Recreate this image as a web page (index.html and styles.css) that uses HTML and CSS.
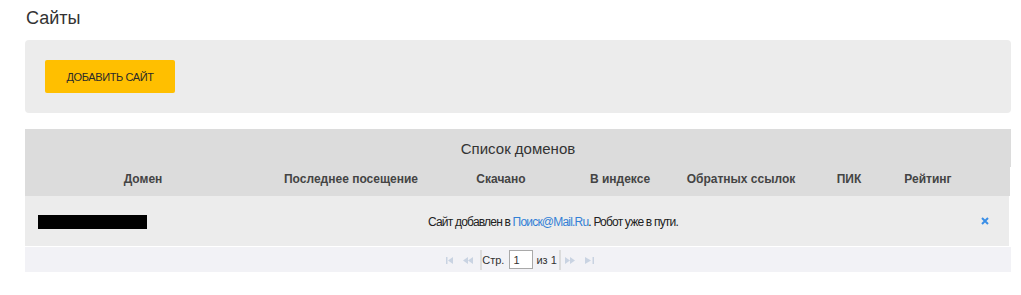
FILE: index.html
```html
<!DOCTYPE html>
<html lang="ru">
<head>
<meta charset="utf-8">
<title>Сайты</title>
<link rel="stylesheet" href="styles.css">
</head>
<body>
<div class="page">
  <h1 class="title">Сайты</h1>
  <div class="panel">
    <button class="btn-add">ДОБАВИТЬ САЙТ</button>
  </div>
  <div class="grid">
    <div class="caption">Список доменов</div>
    <div class="cols">
      <div class="col">Домен</div>
      <div class="col">Последнее посещение</div>
      <div class="col">Скачано</div>
      <div class="col">В индексе</div>
      <div class="col">Обратных ссылок</div>
      <div class="col">ПИК</div>
      <div class="col">Рейтинг</div>
      <div class="col"></div>
    </div>
    <div class="row">
      <div class="cell-domain"><span class="redacted"></span></div>
      <div class="cell-msg">Сайт добавлен в <a class="link" href="#">Поиск@Mail.Ru</a>. Робот уже в пути.</div>
      <div class="cell-close">
        <svg class="close" width="8" height="8" viewBox="0 0 8 8"><path d="M1 1L7 7M7 1L1 7" stroke="#3a8ee6" stroke-width="2"/></svg>
      </div>
    </div>
    <div class="pager">
      <svg class="pg-icon pg-first" width="7" height="7" viewBox="0 0 7 7"><rect x="0" y="0" width="1.5" height="7" fill="#c9d3e2"/><path d="M2 3.5L7 0V7Z" fill="#c9d3e2"/></svg>
      <svg class="pg-icon pg-prev" width="10" height="7" viewBox="0 0 10 7"><path d="M0 3.5L5 0V7Z M5 3.5L10 0V7Z" fill="#c9d3e2"/></svg>
      <span class="sep sep-l"></span>
      <span class="pg-text">Стр.</span>
      <input class="pg-input" type="text" value="1">
      <span class="pg-text pg-of">из 1</span>
      <span class="sep sep-r"></span>
      <svg class="pg-icon pg-next" width="10" height="7" viewBox="0 0 10 7"><path d="M0 0L5 3.5L0 7Z M5 0L10 3.5L5 7Z" fill="#c9d3e2"/></svg>
      <svg class="pg-icon pg-last" width="9" height="7" viewBox="0 0 9 7"><path d="M0 0L6 3.5L0 7Z" fill="#c9d3e2"/><rect x="7.5" y="0" width="1.5" height="7" fill="#c9d3e2"/></svg>
    </div>
  </div>
</div>
</body>
</html>
```

FILE: styles.css
```css
* { box-sizing: border-box; }
html, body { margin: 0; padding: 0; background: #fff; }
body {
  font-family: "Liberation Sans", Arial, sans-serif;
  color: #333;
}
.page {
  padding: 8px 10px 0 25px;
}
.title {
  margin: 0 0 11px 1px;
  font-size: 18px;
  font-weight: normal;
  line-height: 21px;
  color: #333;
}
.panel {
  width: 986px;
  background: #ececec;
  border-radius: 4px;
  padding: 20px;
}
.btn-add {
  display: block;
  width: 130px;
  height: 33px;
  border: 0;
  border-radius: 2px;
  background: #ffbf00;
  color: #2a2a2a;
  font-family: "Liberation Sans", Arial, sans-serif;
  font-size: 11px;
  letter-spacing: -0.4px;
  padding: 0;
}
.grid {
  width: 986px;
  margin-top: 16px;
}
.caption {
  background: #dcdcdc;
  height: 38px;
  line-height: 20px;
  padding-top: 10px;
  text-align: center;
  font-size: 15px;
  color: #333;
}
.cols {
  display: grid;
  grid-template-columns: 236px 180px 120px 118px 124px 92px 66px 1fr;
  background: #dcdcdc;
  height: 29px;
  margin-right: 1px;
  font-size: 12px;
  font-weight: bold;
  color: #444;
}
.col {
  text-align: center;
  line-height: 14px;
  padding-top: 5px;
}
.row {
  display: flex;
  align-items: center;
  height: 50px;
  background: #ececec;
  margin-right: 2px;
  font-size: 12px;
  color: #222;
}
.cell-domain {
  width: 236px;
  padding-left: 13px;
  display: flex;
  align-items: center;
  padding-top: 1px;
}
.redacted {
  display: block;
  width: 109px;
  height: 14px;
  background: #000;
}
.cell-msg {
  flex: 1;
  padding-left: 167px;
  line-height: 14px;
  letter-spacing: -0.8px;
  padding-top: 1px;
}
.link {
  color: #3381d6;
  text-decoration: none;
}
.cell-close {
  width: 48px;
  display: flex;
  justify-content: center;
  align-items: center;
  padding-right: 1px;
}
.close { display: block; }
.pager {
  margin-top: 1px;
  height: 25px;
  background: #f2f2f6;
  display: flex;
  align-items: center;
  justify-content: center;
  font-size: 11px;
  color: #333;
  padding-left: 4px;
}
.pg-icon { display: block; margin-top: 1px; }
.pg-prev { margin-left: 10px; }
.sep {
  display: block;
  width: 2px;
  height: 20px;
  background: #dcdcdc;
}
.sep-l { margin-left: 7px; }
.sep-r { margin-left: 2px; }
.pg-next { margin-left: 4px; }
.pg-last { margin-left: 10px; }
.pg-text { line-height: 14px; }
.pg-input {
  width: 24px;
  height: 19px;
  margin: 0 3px 0 5px;
  border: 1px solid #a9a9a9;
  background: #fff;
  padding: 1px 3px;
  font-family: "Liberation Sans", Arial, sans-serif;
  font-size: 11px;
  color: #333;
}
```
